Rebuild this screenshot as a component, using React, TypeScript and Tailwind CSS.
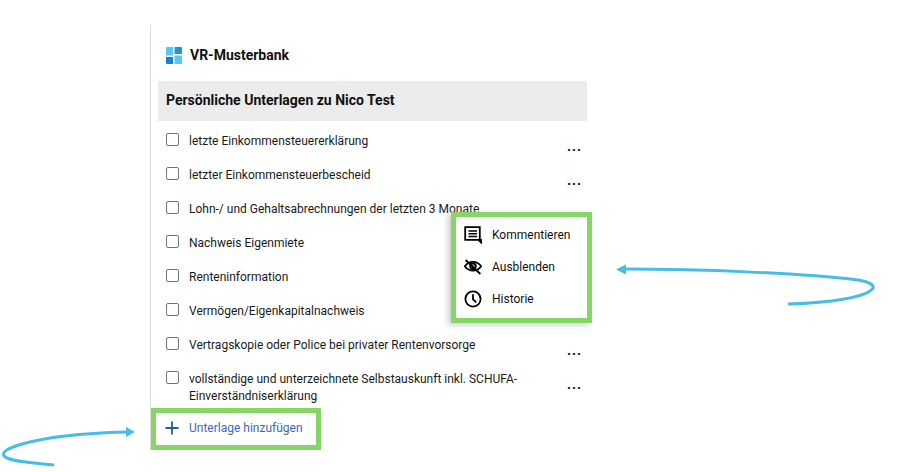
import { Plus } from "lucide-react";

const docs = [
  { label: "letzte Einkommensteuererklärung", more: true },
  { label: "letzter Einkommensteuerbescheid", more: true },
  { label: "Lohn-/ und Gehaltsabrechnungen der letzten 3 Monate", more: false },
  { label: "Nachweis Eigenmiete", more: false },
  { label: "Renteninformation", more: false },
  { label: "Vermögen/Eigenkapitalnachweis", more: false },
  { label: "Vertragskopie oder Police bei privater Rentenvorsorge", more: true },
  { label: "vollständige und unterzeichnete Selbstauskunft inkl. SCHUFA-Einverständniserklärung", more: true },
];

function Logo() {
  return (
    <svg width="16" height="17" viewBox="0 0 16 17" className="shrink-0">
      <path d="M1 0h6v8.500H0V1a1 1 0 0 1 1-1Z" fill="#56c8f2" />
      <path d="M8.500 0H15a1 1 0 0 1 1 1v6H8.500Z" fill="#2b90d4" />
      <path d="M0 10h7v7H1a1 1 0 0 1-1-1Z" fill="#1483cc" />
      <path d="M8.500 8.500H16V16a1 1 0 0 1-1 1H8.500Z" fill="#56c8f2" />
    </svg>
  );
}

function CommentIcon() {
  return (
    <svg width="18" height="18" viewBox="0 0 18 18" fill="none" stroke="#000" strokeWidth="1.800" className="shrink-0">
      <path d="M1.200 1.200h14.600v12.600h1.200v2.600l-2.600-2.600H1.200Z" />
      <path d="M4.500 5h8.500M4.500 7.800h8.500M4.500 10.600h8.500" strokeWidth="1.500" />
    </svg>
  );
}

function EyeOffIcon() {
  return (
    <svg width="18" height="18" viewBox="0 0 18 18" fill="none" stroke="#000" strokeWidth="1.800" className="shrink-0">
      <path d="M0.800 8.200C3 5.200 5.800 3.800 9 3.800s6 1.400 8.200 4.400c-2.200 3-5 4.400-8.200 4.400S3 11.200.8 8.200Z" />
      <circle cx="9" cy="8.200" r="2.800" fill="#000" fillOpacity="0.35" />
      <path d="M1.600 2 16.400 16" />
    </svg>
  );
}

function ClockIcon() {
  return (
    <svg width="18" height="18" viewBox="0 0 18 18" fill="none" stroke="#000" strokeWidth="1.800" className="shrink-0">
      <circle cx="9" cy="9" r="7.600" />
      <path d="M9 4.200V9.400l3.200 2.800" />
    </svg>
  );
}

function MenuRow({ icon, label }: { icon: React.ReactNode; label: string }) {
  return (
    <div className="flex h-8 items-center gap-[10px] pl-[8px]">
      {icon}
      <span className="text-xs text-[#111]">{label}</span>
    </div>
  );
}

function DocRow({ label, more }: { label: string; more: boolean }) {
  return (
    <div className="flex min-h-[34px] items-start py-[7px] pl-2">
      <span className="h-[13px] w-[13px] shrink-0 rounded-[2px] border border-[#757575] bg-white" />
      <span className="ml-[10px] w-[356px] text-xs leading-[17px] text-[#1a1a1a]">{label}</span>
      {more && <span className="-mb-[5px] ml-[22px] mt-[5px] text-sm font-bold leading-[17px] tracking-[1px] text-[#111]">...</span>}
    </div>
  );
}

export default function App() {
  return (
    <div className="relative h-[472px] w-[897px] overflow-hidden bg-white font-['Roboto',sans-serif]">
      <div className="ml-[150px] pt-[25px]">
        <div className="h-[425px] w-[437px] border-l border-[#dcdcdc] pl-[7px]">
          <div className="flex h-[56px] items-center gap-2 pl-2 pt-[4px]">
            <Logo />
            <span className="text-sm font-bold text-[#111]">VR-Musterbank</span>
          </div>
          <div className="flex h-10 items-center bg-[#ececec] pb-[2px] pl-2 text-sm font-bold text-[#111]">
            Persönliche Unterlagen zu Nico Test
          </div>
          <div className="pt-[5px]">
            {docs.map((d) => (
              <DocRow key={d.label} label={d.label} more={d.more} />
            ))}
          </div>
        </div>
      </div>

      {/* highlighted add button */}
      <div className="absolute left-[151px] top-[408px] flex h-[42px] w-[170px] items-center border-[5px] border-[#86d666] pb-[2px] pl-[6px]">
        <Plus size={20} color="#1d5fa8" strokeWidth={2.200} />
        <span className="ml-[7px] text-xs text-[#3d66b8]">Unterlage hinzufügen</span>
      </div>

      {/* highlighted context menu */}
      <div className="absolute left-[451px] top-[212px] h-[111px] w-[141px] border-[5px] border-[#86d666] bg-white pt-[2px] shadow-[-3px_2px_6px_rgba(0,0,0,0.2)]">
        <MenuRow icon={<CommentIcon />} label="Kommentieren" />
        <MenuRow icon={<EyeOffIcon />} label="Ausblenden" />
        <MenuRow icon={<ClockIcon />} label="Historie" />
      </div>

      {/* arrows */}
      <svg className="absolute left-0 top-0" width="897" height="472" fill="none">
        <path d="M624 269C700 269 800 273 858 280C870 282 874 285 873 288C868 297 830 303 788 304" stroke="#45bde6" strokeWidth="3" />
        <path d="M616 269.500 626 264.500V274.500Z" fill="#45bde6" />
        <path d="M126 432C90 433 50 436 22 444C6 449 2 452 4 456C8 461 30 463 54 465" stroke="#45bde6" strokeWidth="3" />
        <path d="M135 432 126 427V437Z" fill="#45bde6" />
      </svg>
    </div>
  );
}
